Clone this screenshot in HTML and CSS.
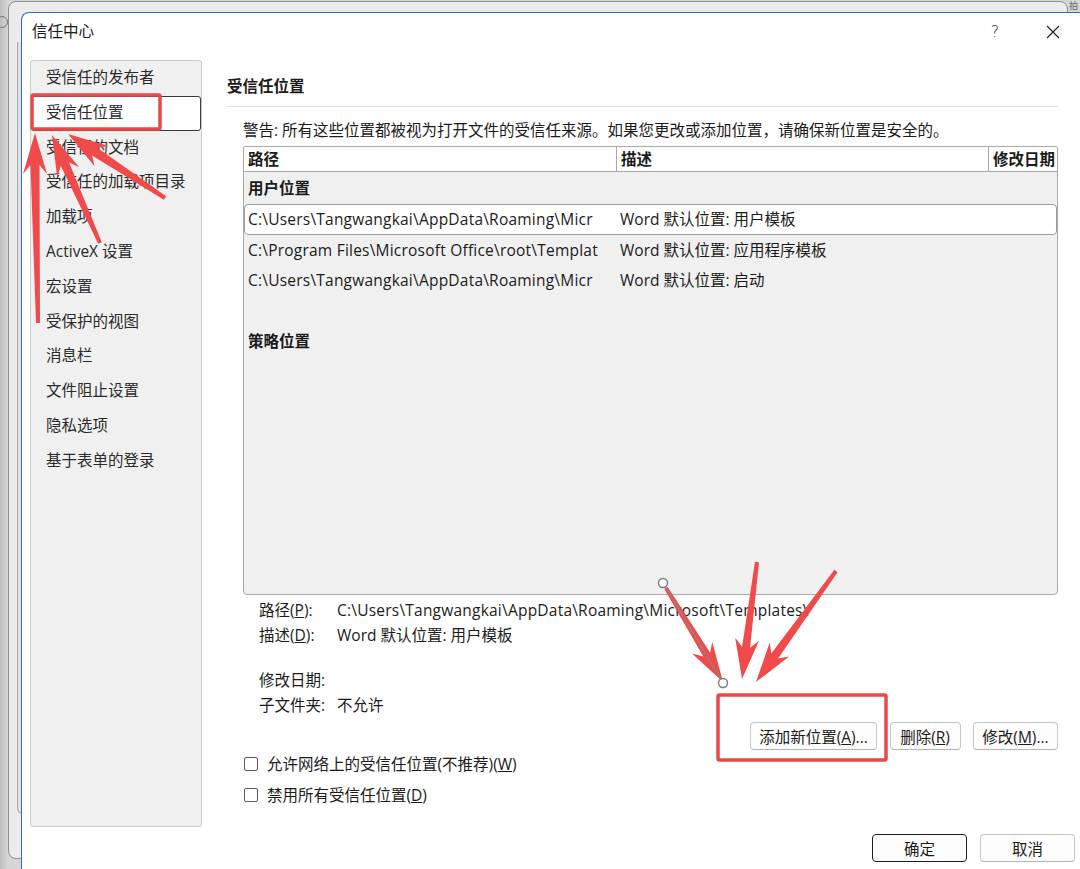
FILE: index.html
```html
<!DOCTYPE html>
<html lang="zh-CN">
<head>
    <meta charset="UTF-8">
    <title>信任中心</title>
    <link rel="stylesheet" href="styles.css">
</head>
<body>

    <div class="desktop">
        <div class="back-window">
            <div class="back-panel"></div>
        </div>
        <span class="back-icon"></span>
        <span class="back-glyph">拍</span>

        <div class="dialog">
            <div class="titlebar">
                <span class="title">信任中心</span>
                <span class="tb-btn help">?</span>
                <span class="tb-btn close">
                    <svg width="14" height="14" viewBox="0 0 14 14"><path d="M1 1 L13 13 M13 1 L1 13" stroke="#1a1a1a" stroke-width="1.1" fill="none"/></svg>
                </span>
            </div>

            <div class="main">
                <ul class="nav">
                    <li>受信任的发布者</li>
                    <li class="active">受信任位置</li>
                    <li>受信任的文档</li>
                    <li>受信任的加载项目录</li>
                    <li>加载项</li>
                    <li>ActiveX 设置</li>
                    <li>宏设置</li>
                    <li>受保护的视图</li>
                    <li>消息栏</li>
                    <li>文件阻止设置</li>
                    <li>隐私选项</li>
                    <li>基于表单的登录</li>
                </ul>

                <div class="content">
                    <h3 class="heading">受信任位置</h3>
                    <p class="warning">警告: 所有这些位置都被视为打开文件的受信任来源。如果您更改或添加位置，请确保新位置是安全的。</p>

                    <div class="table">
                        <div class="thead">
                            <div class="th col-path">路径</div>
                            <div class="th col-desc">描述</div>
                            <div class="th col-date">修改日期</div>
                        </div>
                        <div class="group">用户位置</div>
                        <div class="row selected">
                            <span class="col-path">C:\Users\Tangwangkai\AppData\Roaming\Micr</span>
                            <span class="col-desc">Word 默认位置: 用户模板</span>
                        </div>
                        <div class="row">
                            <span class="col-path">C:\Program Files\Microsoft Office\root\Templat</span>
                            <span class="col-desc">Word 默认位置: 应用程序模板</span>
                        </div>
                        <div class="row">
                            <span class="col-path">C:\Users\Tangwangkai\AppData\Roaming\Micr</span>
                            <span class="col-desc">Word 默认位置: 启动</span>
                        </div>
                        <div class="group policy">策略位置</div>
                    </div>

                    <div class="details">
                        <div class="detail"><span class="label">路径(<u>P</u>):</span><span class="path-value">C:\Users\Tangwangkai\AppData\Roaming\Microsoft\Templates\</span></div>
                        <div class="detail"><span class="label">描述(<u>D</u>):</span><span>Word 默认位置: 用户模板</span></div>
                        <div class="detail gap"><span class="label">修改日期:</span><span></span></div>
                        <div class="detail"><span class="label">子文件夹:</span><span>不允许</span></div>
                    </div>

                    <div class="actions">
                        <button class="btn btn-add">添加新位置(<u>A</u>)...</button>
                        <button class="btn btn-del">删除(<u>R</u>)</button>
                        <button class="btn btn-mod">修改(<u>M</u>)...</button>
                    </div>

                    <div class="checks">
                        <label class="check"><span class="box"></span>允许网络上的受信任位置(不推荐)(<u>W</u>)</label>
                        <label class="check"><span class="box"></span>禁用所有受信任位置(<u>D</u>)</label>
                    </div>
                </div>
            </div>

            <div class="footer">
                <button class="btn btn-ok">确定</button>
                <button class="btn btn-cancel">取消</button>
            </div>
        </div>

        <!-- red marks drawn on top of the screenshot -->
        <svg class="marks" width="1080" height="869" viewBox="0 0 1080 869">
            <g fill="#f04a4a">
                <polygon points="36,323 40,323 39.5,165 47,174 35,133 23,174 30.5,165"/>
                <polygon points="101.8,242.2 69.1,162.4 79.2,167.2 52,135 57.2,177.1 60.9,166 98.2,243.8"/>
                <polygon points="166.1,196.3 97.3,147.8 108.6,145.9 68,134 94.6,166.3 92.1,155.4 163.9,199.7"/>
                <polygon points="664.3,589 703.3,656.5 692,653.5 723,682 712.2,641.8 710.2,652.7 667.7,587"/>
                <polygon points="755,561.8 742.1,646.8 735.2,637.8 742,679 759,640.8 750.1,647.8 759,562.2"/>
                <polygon points="834.4,569.8 771.3,653.5 769.7,642.6 756,682 789.1,656.6 778.1,658.5 837.6,572.2"/>
            </g>
            <line x1="663" y1="583" x2="723" y2="683" stroke="#8a8a8a" stroke-width="1.3"/>
            <circle cx="663" cy="583" r="4.5" fill="#fff" stroke="#7a7a7a" stroke-width="1.4"/>
            <circle cx="723" cy="683" r="4.5" fill="#fff" stroke="#7a7a7a" stroke-width="1.4"/>
            <g fill="none" stroke="#ec4848" stroke-width="3.5">
                <rect x="32" y="95" width="128" height="34" rx="1.5"/>
                <rect x="718" y="695" width="168" height="65" rx="1.5"/>
            </g>
        </svg>
    </div>

</body>
</html>
```

FILE: styles.css
```css
* {
    box-sizing: border-box;
}

body {
    margin: 0;
    overflow: hidden;
    font-family: "Open Sans", "Noto Sans CJK SC", sans-serif;
    font-size: 15.5px;
    color: #1b1b1b;
}

.desktop {
    position: relative;
    width: 1080px;
    height: 869px;
    overflow: hidden;
    background: linear-gradient(90deg, #bdbdbd, #d6d6d6 8px);
}

/* window behind the dialog */
.back-window {
    position: absolute;
    left: 8px;
    top: 1px;
    width: 1060px;
    height: 858px;
    background: #ececec;
    border: 1px solid #8f8f8f;
    border-radius: 8px;
}

.back-panel {
    position: absolute;
    left: 8px;
    top: 40px;
    width: 40px;
    height: 772px;
    border-left: 1px solid #a9a9a9;
    border-bottom: 1px solid #a9a9a9;
    border-radius: 0 0 0 6px;
    background: #e2e2e2;
}

.back-icon {
    position: absolute;
    left: -4px;
    top: 16px;
    width: 12px;
    height: 12px;
    border: 1px solid #777;
    border-radius: 50%;
}

.back-glyph {
    position: absolute;
    left: 1069px;
    top: 1px;
    font-size: 9px;
    line-height: 10px;
    color: #666;
}

.dialog {
    position: absolute;
    left: 21px;
    top: 12px;
    width: 1080px;
    height: 870px;
    background: #fff;
    border-top: 1px solid #3468c4;
    border-left: 1.5px solid #3468c4;
    border-radius: 8px 0 0 0;
}

.titlebar {
    display: flex;
    align-items: center;
    height: 34px;
    padding-left: 10px;
}

.title {
    flex: 1;
}

.tb-btn {
    width: 46px;
    text-align: center;
}

.help {
    margin-right: 12px;
    padding-top: 3px;
    font-family: "DejaVu Sans", sans-serif;
    font-weight: 300;
    font-size: 16px;
    color: #333;
}

.close {
    display: flex;
    justify-content: center;
    padding-top: 3px;
    margin-right: 25px;
}

.main {
    display: flex;
    padding: 13px 0 0 8px;
}

.nav {
    list-style: none;
    margin: 0;
    padding: 0;
    width: 172px;
    height: 767px;
    background: #f0f0f0;
    border: 1px solid #c8c8c8;
    border-radius: 3px;
}

.nav li {
    height: 34.8px;
    line-height: 33px;
    padding-left: 15px;
    color: #2a2a2a;
    white-space: nowrap;
}

.nav li.active {
    background: #fff;
    border: 1px solid #3a3a3a;
    border-radius: 3px;
    line-height: 31px;
    padding-left: 14px;
}

.content {
    margin-left: 25px;
    width: 831px;
}

.heading {
    margin: 0;
    padding: 16px 0 10px;
    line-height: 20px;
    font-size: 15.5px;
    font-weight: bold;
    border-bottom: 1px solid #dedede;
}

.warning {
    margin: 13px 0 0;
    padding-left: 16px;
    line-height: 20px;
    white-space: nowrap;
}

.table {
    margin: 6px 0 0 16px;
    width: 815px;
    height: 449px;
    background: #f0f0f0;
    border: 1px solid #a9a9a9;
    border-radius: 2px 2px 4px 4px;
    overflow: hidden;
}

.thead {
    display: flex;
    height: 25px;
    background: #fff;
    border-bottom: 1px solid #a9a9a9;
    font-weight: bold;
    line-height: 24px;
}

.th {
    padding-left: 4px;
    white-space: nowrap;
    overflow: hidden;
}

.th.col-path {
    width: 373px;
    border-right: 1px solid #a9a9a9;
}

.th.col-desc {
    width: 372px;
    border-right: 1px solid #a9a9a9;
}

.th.col-date {
    flex: 1;
}

.group {
    line-height: 32px;
    padding-left: 4px;
    font-weight: bold;
}

.group.policy {
    margin-top: 29.5px;
}

.row {
    display: flex;
    height: 30.5px;
    line-height: 28px;
    border: 1px solid transparent;
    border-radius: 4px;
}

.row.selected {
    background: #fff;
    border-color: #9c9c9c;
}

.row .col-path {
    width: 372px;
    padding-left: 3px;
    letter-spacing: 0.22px;
    white-space: nowrap;
    overflow: hidden;
}

.row .col-desc {
    padding-left: 3px;
    white-space: nowrap;
}

.details {
    margin-top: 2.5px;
    padding-left: 32px;
}

.detail {
    display: flex;
    line-height: 25px;
    height: 25px;
    white-space: nowrap;
}

.detail.gap {
    margin-top: 20px;
}

.label {
    width: 78px;
}

.path-value {
    letter-spacing: 0.22px;
}

.actions {
    display: flex;
    justify-content: flex-end;
    gap: 12.5px;
    margin-top: 4.5px;
}

.btn {
    height: 28px;
    padding: 0;
    font-family: inherit;
    font-size: 15.5px;
    color: #1b1b1b;
    background: #fdfdfd;
    border: 1px solid #c6c6c6;
    border-bottom-color: #b4b4b4;
    border-radius: 4px;
}

.btn-add {
    width: 127px;
}

.btn-del {
    width: 71px;
}

.btn-mod {
    width: 85px;
}

.checks {
    margin-top: -2px;
    padding-left: 17px;
}

.check {
    display: flex;
    align-items: center;
    height: 31px;
    white-space: nowrap;
}

.box {
    width: 14px;
    height: 14px;
    margin-right: 9px;
    border: 1px solid #5a5a5a;
    border-radius: 2px;
    background: #fff;
}

.footer {
    display: flex;
    justify-content: flex-end;
    gap: 13px;
    padding: 7px 26px 0 0;
}

.btn-ok,
.btn-cancel {
    width: 95px;
}

.btn-ok {
    border: 1.5px solid #1e1e1e;
}

.marks {
    position: absolute;
    left: 0;
    top: 0;
    pointer-events: none;
}
```
